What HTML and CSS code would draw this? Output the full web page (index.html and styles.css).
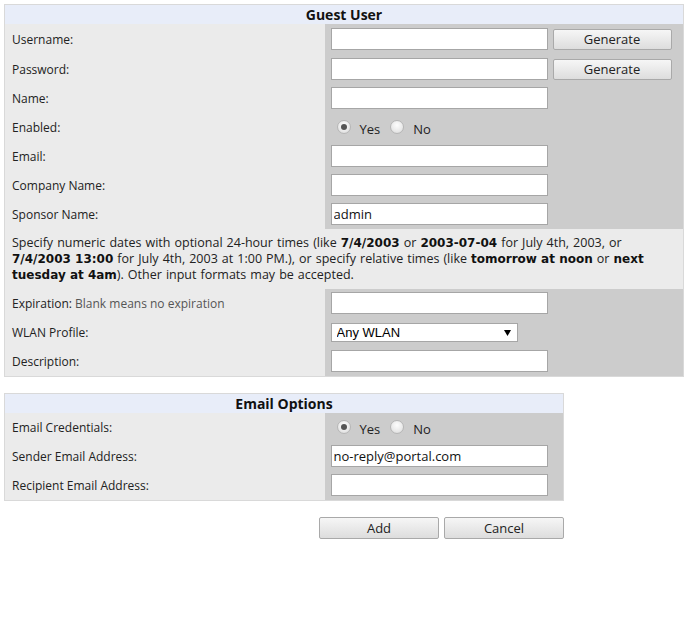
FILE: index.html
```html
<!DOCTYPE html>
<html>
<head>
<meta charset="utf-8">
<title>Guest User</title>
<link rel="stylesheet" href="styles.css">
</head>
<body>
<div class="page">
  <table class="panel panel-guest">
    <colgroup><col class="c-lbl"><col class="c-fld"></colgroup>
    <tr><th colspan="2" class="head">Guest User</th></tr>
    <tr class="row row-tall">
      <td class="lbl">Username:</td>
      <td class="fld"><input class="txt" type="text"><button class="btn btn-gen" type="button">Generate</button></td>
    </tr>
    <tr class="row row-tall">
      <td class="lbl">Password:</td>
      <td class="fld"><input class="txt" type="text"><button class="btn btn-gen" type="button">Generate</button></td>
    </tr>
    <tr class="row">
      <td class="lbl">Name:</td>
      <td class="fld"><input class="txt" type="text"></td>
    </tr>
    <tr class="row">
      <td class="lbl">Enabled:</td>
      <td class="fld">
        <span class="radios">
          <span class="radio checked"></span><span class="rlabel">Yes</span>
          <span class="radio"></span><span class="rlabel">No</span>
        </span>
      </td>
    </tr>
    <tr class="row">
      <td class="lbl">Email:</td>
      <td class="fld"><input class="txt" type="text"></td>
    </tr>
    <tr class="row">
      <td class="lbl">Company Name:</td>
      <td class="fld"><input class="txt" type="text"></td>
    </tr>
    <tr class="row">
      <td class="lbl">Sponsor Name:</td>
      <td class="fld"><input class="txt" type="text" value="admin"></td>
    </tr>
    <tr>
      <td colspan="2" class="note">Specify numeric dates with optional 24-hour times (like <b>7/4/2003</b> or <b>2003-07-04</b> for July 4th, 2003, or<br><b>7/4/2003 13:00</b> for July 4th, 2003 at 1:00 PM.), or specify relative times (like <b>tomorrow at noon</b> or <b>next</b><br><b>tuesday at 4am</b>). Other input formats may be accepted.</td>
    </tr>
    <tr class="row">
      <td class="lbl">Expiration: <span class="hint">Blank means no expiration</span></td>
      <td class="fld"><input class="txt" type="text"></td>
    </tr>
    <tr class="row">
      <td class="lbl">WLAN Profile:</td>
      <td class="fld">
        <span class="sel">
          <select class="select"><option>Any WLAN</option></select>
          <svg class="sel-arrow" width="7" height="6" viewBox="0 0 7 6"><path d="M0 0H7L3.5 6Z" fill="#000"/></svg>
        </span>
      </td>
    </tr>
    <tr class="row">
      <td class="lbl">Description:</td>
      <td class="fld"><input class="txt" type="text"></td>
    </tr>
  </table>

  <table class="panel panel-email">
    <colgroup><col class="c-lbl"><col class="c-fld"></colgroup>
    <tr><th colspan="2" class="head">Email Options</th></tr>
    <tr class="row">
      <td class="lbl">Email Credentials:</td>
      <td class="fld">
        <span class="radios">
          <span class="radio checked"></span><span class="rlabel">Yes</span>
          <span class="radio"></span><span class="rlabel">No</span>
        </span>
      </td>
    </tr>
    <tr class="row">
      <td class="lbl">Sender Email Address:</td>
      <td class="fld"><input class="txt" type="text" value="no-reply@portal.com"></td>
    </tr>
    <tr class="row">
      <td class="lbl">Recipient Email Address:</td>
      <td class="fld"><input class="txt" type="text"></td>
    </tr>
  </table>

  <div class="actions">
    <button class="btn btn-act" type="button">Add</button>
    <button class="btn btn-act" type="button">Cancel</button>
  </div>
</div>
</body>
</html>
```

FILE: styles.css
```css
html, body {
  margin: 0;
  padding: 0;
  background: #ffffff;
}

body {
  font-family: "Open Sans", "DejaVu Sans", sans-serif;
  font-size: 12px;
  color: #222222;
}

.page {
  padding: 4px;
}

.panel {
  border-collapse: collapse;
  border: 1px solid #d9d9d9;
  table-layout: fixed;
}

.c-lbl {
  width: 320px;
}

.panel-guest {
  width: 680px;
}

.panel-email {
  width: 560px;
  margin-top: 16px;
}

.head {
  background: #e8edf9;
  font-size: 14px;
  font-weight: bold;
  color: #111111;
  height: 19px;
  padding: 0;
  line-height: 19px;
  text-align: center;
}

.lbl {
  background: #ebebeb;
  padding: 0 0 0 7px;
  vertical-align: middle;
  white-space: nowrap;
}

.fld {
  background: #cccccc;
  padding: 3px 6px 4px 6px;
  vertical-align: middle;
  white-space: nowrap;
  line-height: 0;
}

.row-tall .fld {
  padding: 4px 6px 4px 6px;
}

.row .lbl,
.row .fld {
  height: 22px;
}

.hint {
  color: #555555;
}

.txt {
  box-sizing: border-box;
  width: 217px;
  height: 22px;
  margin: 0;
  padding: 0 2px;
  border: 1px solid #a6a6a6;
  background: #ffffff;
  font-family: "Open Sans", "DejaVu Sans", sans-serif;
  font-size: 13px;
  color: #111111;
  vertical-align: middle;
  outline: none;
}

.btn {
  box-sizing: border-box;
  margin: 0;
  border: 1px solid #a9a9a9;
  border-radius: 2px;
  background: linear-gradient(#f6f6f6, #dddddd);
  font-family: "Open Sans", "DejaVu Sans", sans-serif;
  font-size: 13px;
  color: #222222;
  padding: 0;
  cursor: pointer;
}

.btn-gen {
  width: 119px;
  height: 21px;
  margin-left: 5px;
  vertical-align: middle;
  line-height: 19px;
}

.radios {
  display: inline-flex;
  align-items: center;
  height: 22px;
  line-height: 22px;
  font-size: 13px;
  color: #222222;
}

.radio {
  box-sizing: border-box;
  display: inline-block;
  width: 14px;
  height: 14px;
  border-radius: 50%;
  border: 1px solid #b5b5b5;
  background: radial-gradient(circle at 50% 35%, #fdfdfd 0%, #e9e9e9 60%, #d6d6d6 100%);
  position: relative;
  margin: 0 9px 0 6px;
}

.radio + .rlabel + .radio {
  margin-left: 10px;
}

.radio.checked::after {
  content: "";
  position: absolute;
  left: 3px;
  top: 3px;
  width: 6px;
  height: 6px;
  border-radius: 50%;
  background: #555555;
}

.rlabel {
  position: relative;
  top: 2px;
}

.sel {
  position: relative;
  display: inline-block;
  vertical-align: middle;
}

.select {
  -webkit-appearance: none;
  appearance: none;
  box-sizing: border-box;
  width: 187px;
  height: 19px;
  margin: 0;
  padding: 0 0 0 5px;
  border: 1px solid #a6a6a6;
  border-radius: 0;
  background: #ffffff;
  font-family: "Liberation Sans", Arial, sans-serif;
  font-size: 13px;
  color: #000000;
  line-height: 17px;
  outline: none;
}

.sel-arrow {
  position: absolute;
  right: 7px;
  top: 7px;
}

.note {
  background: #ebebeb;
  padding: 6px 7px 6px 7px;
  font-size: 12.5px;
  line-height: 16px;
  white-space: nowrap;
  word-spacing: 0.8px;
}

.note b {
  font-family: "DejaVu Sans", sans-serif;
  font-size: 12px;
  word-spacing: 0;
  color: #111111;
}

.actions {
  width: 560px;
  margin-top: 16px;
  display: flex;
  justify-content: flex-end;
  gap: 5px;
}

.btn-act {
  width: 120px;
  height: 22px;
  line-height: 20px;
}
```
